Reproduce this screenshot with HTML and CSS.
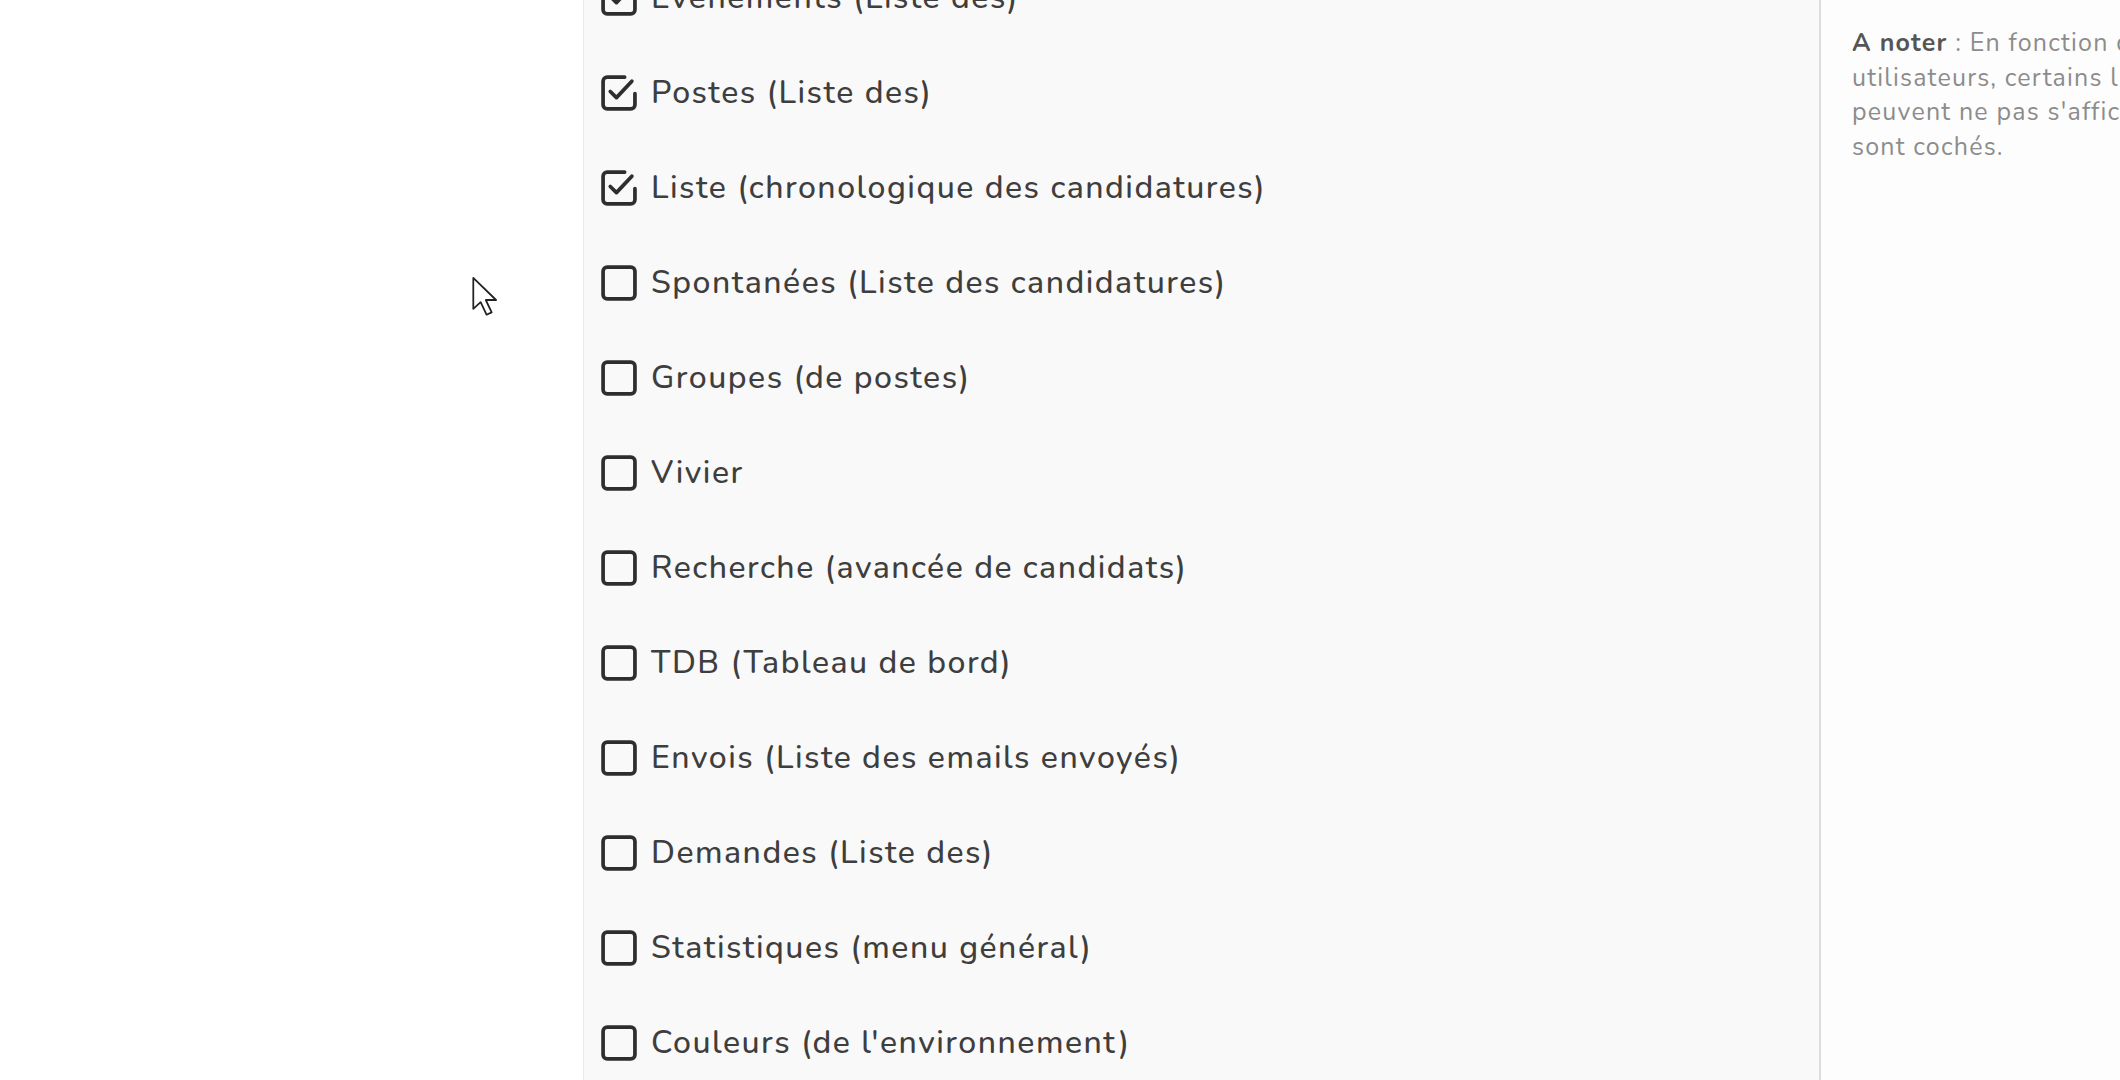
FILE: index.html
```html
<!DOCTYPE html>
<html lang="fr">
<head>
  <meta charset="UTF-8">
  <title>Menu</title>
  <link rel="stylesheet" href="styles.css">
</head>
<body>
  <div class="layout">
    <div class="side"></div>

    <div class="panel">
      <ul class="menu-list">
        <li><svg class="box" viewBox="0 0 36 36"><path d="M24 3H7a4 4 0 0 0-4 4v23a4 4 0 0 0 4 4h23a4 4 0 0 0 4-4V19"/><path d="M10 17l6 6l15-16"/></svg>Evénements (Liste des)</li>
        <li><svg class="box" viewBox="0 0 36 36"><path d="M24 3H7a4 4 0 0 0-4 4v23a4 4 0 0 0 4 4h23a4 4 0 0 0 4-4V19"/><path d="M10 17l6 6l15-16"/></svg>Postes (Liste des)</li>
        <li><svg class="box" viewBox="0 0 36 36"><path d="M24 3H7a4 4 0 0 0-4 4v23a4 4 0 0 0 4 4h23a4 4 0 0 0 4-4V19"/><path d="M10 17l6 6l15-16"/></svg>Liste (chronologique des candidatures)</li>
        <li><svg class="box" viewBox="0 0 36 36"><rect x="3" y="3" width="31" height="31" rx="4"/></svg>Spontanées (Liste des candidatures)</li>
        <li><svg class="box" viewBox="0 0 36 36"><rect x="3" y="3" width="31" height="31" rx="4"/></svg>Groupes (de postes)</li>
        <li><svg class="box" viewBox="0 0 36 36"><rect x="3" y="3" width="31" height="31" rx="4"/></svg>Vivier</li>
        <li><svg class="box" viewBox="0 0 36 36"><rect x="3" y="3" width="31" height="31" rx="4"/></svg>Recherche (avancée de candidats)</li>
        <li><svg class="box" viewBox="0 0 36 36"><rect x="3" y="3" width="31" height="31" rx="4"/></svg>TDB (Tableau de bord)</li>
        <li><svg class="box" viewBox="0 0 36 36"><rect x="3" y="3" width="31" height="31" rx="4"/></svg>Envois (Liste des emails envoyés)</li>
        <li><svg class="box" viewBox="0 0 36 36"><rect x="3" y="3" width="31" height="31" rx="4"/></svg>Demandes (Liste des)</li>
        <li><svg class="box" viewBox="0 0 36 36"><rect x="3" y="3" width="31" height="31" rx="4"/></svg>Statistiques (menu général)</li>
        <li><svg class="box" viewBox="0 0 36 36"><rect x="3" y="3" width="31" height="31" rx="4"/></svg>Couleurs (de l'environnement)</li>
      </ul>
    </div>

    <div class="aside">
      <p class="note"><b>A noter</b> : En fonction des droits des<br>utilisateurs, certains liens<br>peuvent ne pas s'afficher<br>sont cochés.</p>
    </div>
  </div>

  <!-- mouse pointer -->
  <svg class="cursor" width="36" height="50" viewBox="0 0 24 34">
    <path d="M2 2v21l5-4.5l4 8.5l3.5-1.6l-4-8.4h7z" fill="#fff" stroke="#222" stroke-width="1.2" stroke-linejoin="round"/>
  </svg>
</body>
</html>
```

FILE: styles.css
```css
html, body {
  margin: 0;
  height: 100%;
  overflow: hidden;
}
body {
  font-family: "Nunito", Lato, "Open Sans", sans-serif;
  background: #fff;
  color: #444;
}
.layout {
  display: flex;
  height: 100%;
}
.side {
  width: 583px;
  flex: none;
  background: #fff;
}
.panel {
  width: 1235px;
  flex: none;
  background: #f9f9f9;
  border-left: 1px solid #ebebeb;
  border-right: 2px solid #dcdcdc;
  overflow: hidden;
}
.menu-list {
  list-style: none;
  margin: -50px 0 0;
  padding: 0 0 0 16px;
}
.menu-list li {
  height: 95px;
  display: flex;
  align-items: center;
  gap: 14px;
  font-size: 32px;
  font-weight: 500;
  letter-spacing: 1.5px;
  color: #3e3e3e;
}
.box {
  width: 37px;
  height: 37px;
  flex: none;
  fill: none;
  stroke: #2e2e2e;
  stroke-width: 3.6;
  stroke-linecap: round;
  stroke-linejoin: round;
}
.aside {
  flex: 1;
  background: #fdfdfd;
  overflow: hidden;
  padding: 26px 0 0 31px;
}
.note {
  margin: 0;
  font-size: 25px;
  line-height: 34.7px;
  letter-spacing: 1.2px;
  color: #8c8c8c;
  white-space: nowrap;
}
.note b {
  color: #555;
}
.cursor {
  position: absolute;
  left: 470px;
  top: 275px;
}
```
